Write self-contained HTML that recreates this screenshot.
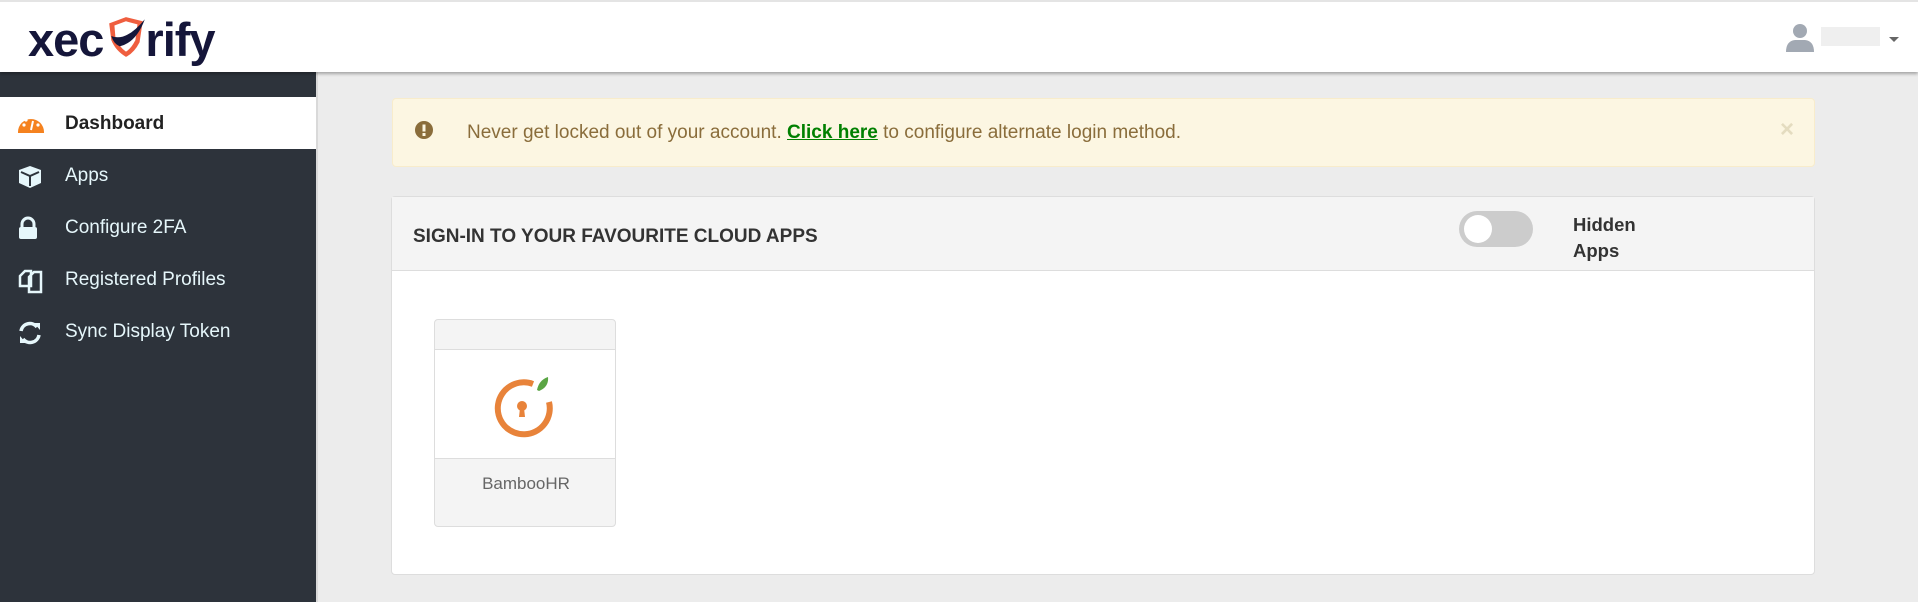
<!DOCTYPE html>
<html><head><meta charset="utf-8"><style>
*{box-sizing:border-box;margin:0;padding:0}
body{width:1918px;height:602px;overflow:hidden;background:#ececec;font-family:"Liberation Sans",Arial,sans-serif;position:relative}
.hdr{position:absolute;left:0;top:0;width:1918px;height:72px;background:#fff;border-top:2px solid #e4e4e4;box-shadow:0 2px 3px rgba(0,0,0,.3);z-index:2}
.logo{position:absolute;left:28px;top:10px;font-size:47px;font-weight:bold;color:#15163a;letter-spacing:-1px}
.side{position:absolute;left:0;top:72px;width:318px;height:530px;background:#2d333b;border-right:2px solid #d9d9d9}
.item{position:absolute;left:0;width:316px;height:52px;color:#e6f7fb;font-size:19px;line-height:54px;padding-left:65px}
.item svg{position:absolute;left:17px;top:15px}
.act{background:#fff;color:#222;font-weight:bold}
.alert{position:absolute;left:392px;top:98px;width:1423px;height:69px;background:#fcf6e2;border:1px solid #f8eccb;border-radius:4px;color:#8a6d3b;font-size:19px}
.panel{position:absolute;left:391px;top:196px;width:1424px;height:379px;background:#fff;border:1px solid #ddd;border-radius:4px}
.ph{height:74px;background:#f4f4f4;border-bottom:1px solid #ddd;position:relative}
.card{position:absolute;left:42px;top:122px;width:182px;height:208px;border:1px solid #ddd;border-radius:4px;background:#f4f4f4;overflow:hidden}
</style></head><body>
<div class="hdr">
 <div class="logo">xec<span style="display:inline-block;width:42px"></span>rify</div>
 <svg style="position:absolute;left:105px;top:13px" width="44" height="44" viewBox="0 0 42 42"><path d="M4 8 L20 2 L36 6 L33 26 Q28 36 20 40 Q10 34 6 24 Z" fill="#ef5e3f"/><path d="M9 10 L20 6 L31 9 L29 24 Q25 32 20 35 Q13 30 10 22Z" fill="#fff"/><path d="M6 20 Q20 26 38 4 Q30 26 14 30 Q8 27 6 20Z" fill="#15163a"/></svg>
 <svg style="position:absolute;left:1785px;top:20px" width="30" height="30" viewBox="0 0 30 30"><circle cx="15" cy="9" r="7" fill="#a2a9b3"/><path d="M1 30 Q1 19 10 18 L20 18 Q29 19 29 30Z" fill="#a2a9b3"/></svg>
 <div style="position:absolute;left:1821px;top:25px;width:59px;height:19px;background:#efefef"></div>
 <div style="position:absolute;left:1889px;top:35px;border:5px solid transparent;border-top:5px solid #666"></div>
</div>
<div class="side">
 <div class="item act" style="top:25px"><svg width="28" height="22" viewBox="0 0 28 22"><path d="M1 20 A13 13 0 0 1 27 20 L27 21 L1 21Z" fill="#f5821f"/><circle cx="7" cy="13" r="1.6" fill="#fff"/><circle cx="9" cy="8" r="1.6" fill="#fff"/><circle cx="14" cy="5.5" r="1.6" fill="#fff"/><circle cx="21" cy="13" r="1.6" fill="#fff"/><path d="M14 18 L16 9" stroke="#fff" stroke-width="2"/></svg>Dashboard</div>
 <div class="item" style="top:77px"><svg width="26" height="26" viewBox="0 0 26 26"><path d="M13 2 L24 6 L24 19 L13 24 L2 19 L2 6Z" fill="#e6f7fb"/><path d="M4 8 L13 12 L22 8 M13 12 L13 22" stroke="#2d333b" stroke-width="2" fill="none"/></svg>Apps</div>
 <div class="item" style="top:129px"><svg width="22" height="24" viewBox="0 0 22 24"><path d="M5 11 V8 A6 6 0 0 1 17 8 V11" stroke="#e6f7fb" stroke-width="3" fill="none"/><rect x="2" y="11" width="18" height="12" rx="2" fill="#e6f7fb"/></svg>Configure 2FA</div>
 <div class="item" style="top:181px"><svg width="28" height="26" viewBox="0 0 28 26"><path d="M3 8 L8 3 L14 3 L14 18 L3 18Z M12 9 L17 4 L24 4 L24 24 L12 24Z" stroke="#e6f7fb" stroke-width="2.5" fill="none"/></svg>Registered Profiles</div>
 <div class="item" style="top:233px"><svg width="26" height="26" viewBox="0 0 26 26"><path d="M4 11 A9 9 0 0 1 20 7 M22 15 A9 9 0 0 1 6 19" stroke="#e6f7fb" stroke-width="3.5" fill="none"/><path d="M17 3 L23 3 L23 10Z M9 23 L3 23 L3 16Z" fill="#e6f7fb"/></svg>Sync Display Token</div>
</div>
<div class="alert">
 <svg style="position:absolute;left:22px;top:22px" width="18" height="18" viewBox="0 0 18 18"><circle cx="9" cy="9" r="9" fill="#8a6d3b"/><rect x="7.5" y="3.5" width="3" height="7" fill="#fcf6e2"/><rect x="7.5" y="12" width="3" height="3" fill="#fcf6e2"/></svg>
 <div style="position:absolute;left:74px;top:23px">Never get locked out of your account. <b style="color:#008000;text-decoration:underline">Click here</b> to configure alternate login method.</div>
 <div style="position:absolute;right:20px;top:17px;font-size:24px;font-weight:bold;color:#e4dcc0">×</div>
</div>
<div class="panel">
 <div class="ph">
  <div style="position:absolute;left:21px;top:29px;font-size:19px;font-weight:bold;color:#333">SIGN-IN TO YOUR FAVOURITE CLOUD APPS</div>
  <div style="position:absolute;left:1067px;top:14px;width:74px;height:36px;border-radius:18px;background:#ccc"><div style="position:absolute;left:5px;top:4px;width:28px;height:28px;border-radius:50%;background:#fff"></div></div>
  <div style="position:absolute;left:1181px;top:15px;font-size:18.5px;font-weight:bold;color:#333;line-height:26px">Hidden<br>Apps</div>
 </div>
 <div class="card">
  <div style="position:absolute;left:0;top:29px;width:182px;height:110px;background:#fff;border-top:1px solid #ddd;border-bottom:1px solid #ddd">
   <svg style="position:absolute;left:58px;top:22px" width="66" height="66" viewBox="0 0 66 66"><path d="M40 12 A26 26 0 1 0 56 30" stroke="#e8833a" stroke-width="6" fill="none"/><circle cx="29" cy="34" r="5" fill="#e8833a"/><path d="M27 36 L26 45 L32 45 L31 36Z" fill="#e8833a"/><path d="M44 18 Q46 8 55 5 Q56 15 46 19Z" fill="#5aa544"/></svg>
  </div>
  <div style="position:absolute;left:0;top:154px;width:182px;text-align:center;font-size:17px;color:#666">BambooHR</div>
 </div>
</div>
</body></html>
